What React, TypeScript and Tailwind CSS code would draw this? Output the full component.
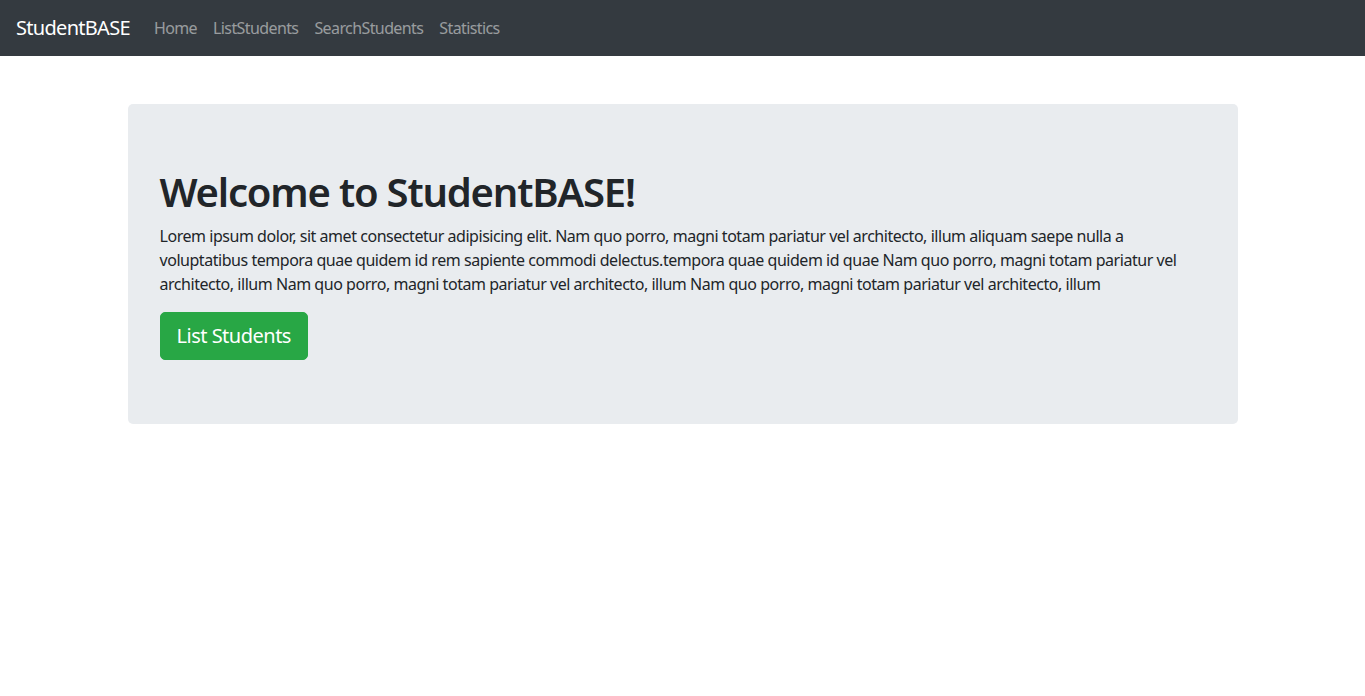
export default function App() {
  const links = ["Home", "ListStudents", "SearchStudents", "Statistics"];

  return (
    <div className="min-h-screen bg-white text-[#212529] font-['Noto_Sans','Open_Sans',sans-serif]">
      <nav className="h-14 bg-[#343a40] px-4 flex items-center">
        <span className="text-[20px] text-white mr-4 leading-[30px] tracking-[-0.7px]">StudentBASE</span>
        <ul className="flex">
          {links.map((l) => (
            <li key={l}>
              <a className="px-2 text-base text-white/50 leading-6 tracking-[-0.6px]">{l}</a>
            </li>
          ))}
        </ul>
      </nav>

      <div className="max-w-[1140px] mx-auto px-[15px] mt-12">
        <div className="bg-[#e9ecef] rounded-[5px] px-8 py-16">
          <h1 className="text-[40px] font-semibold leading-[48px] mb-2 tracking-[-1.2px]">Welcome to StudentBASE!</h1>
          <p className="text-base leading-6 mb-4 tracking-[-0.46px]">
            <span className="block whitespace-nowrap">
              Lorem ipsum dolor, sit amet consectetur adipisicing elit. Nam quo porro, magni totam pariatur vel architecto, illum aliquam saepe nulla a
            </span>
            <span className="block whitespace-nowrap">
              voluptatibus tempora quae quidem id rem sapiente commodi delectus.tempora quae quidem id quae Nam quo porro, magni totam pariatur vel
            </span>
            <span className="block whitespace-nowrap">
              architecto, illum Nam quo porro, magni totam pariatur vel architecto, illum Nam quo porro, magni totam pariatur vel architecto, illum
            </span>
          </p>
          <button className="bg-[#28a745] border border-[#28a745] text-white text-[20px] leading-[30px] px-4 py-2 rounded-[5px] tracking-[-0.5px]">
            List Students
          </button>
        </div>
      </div>
    </div>
  );
}
